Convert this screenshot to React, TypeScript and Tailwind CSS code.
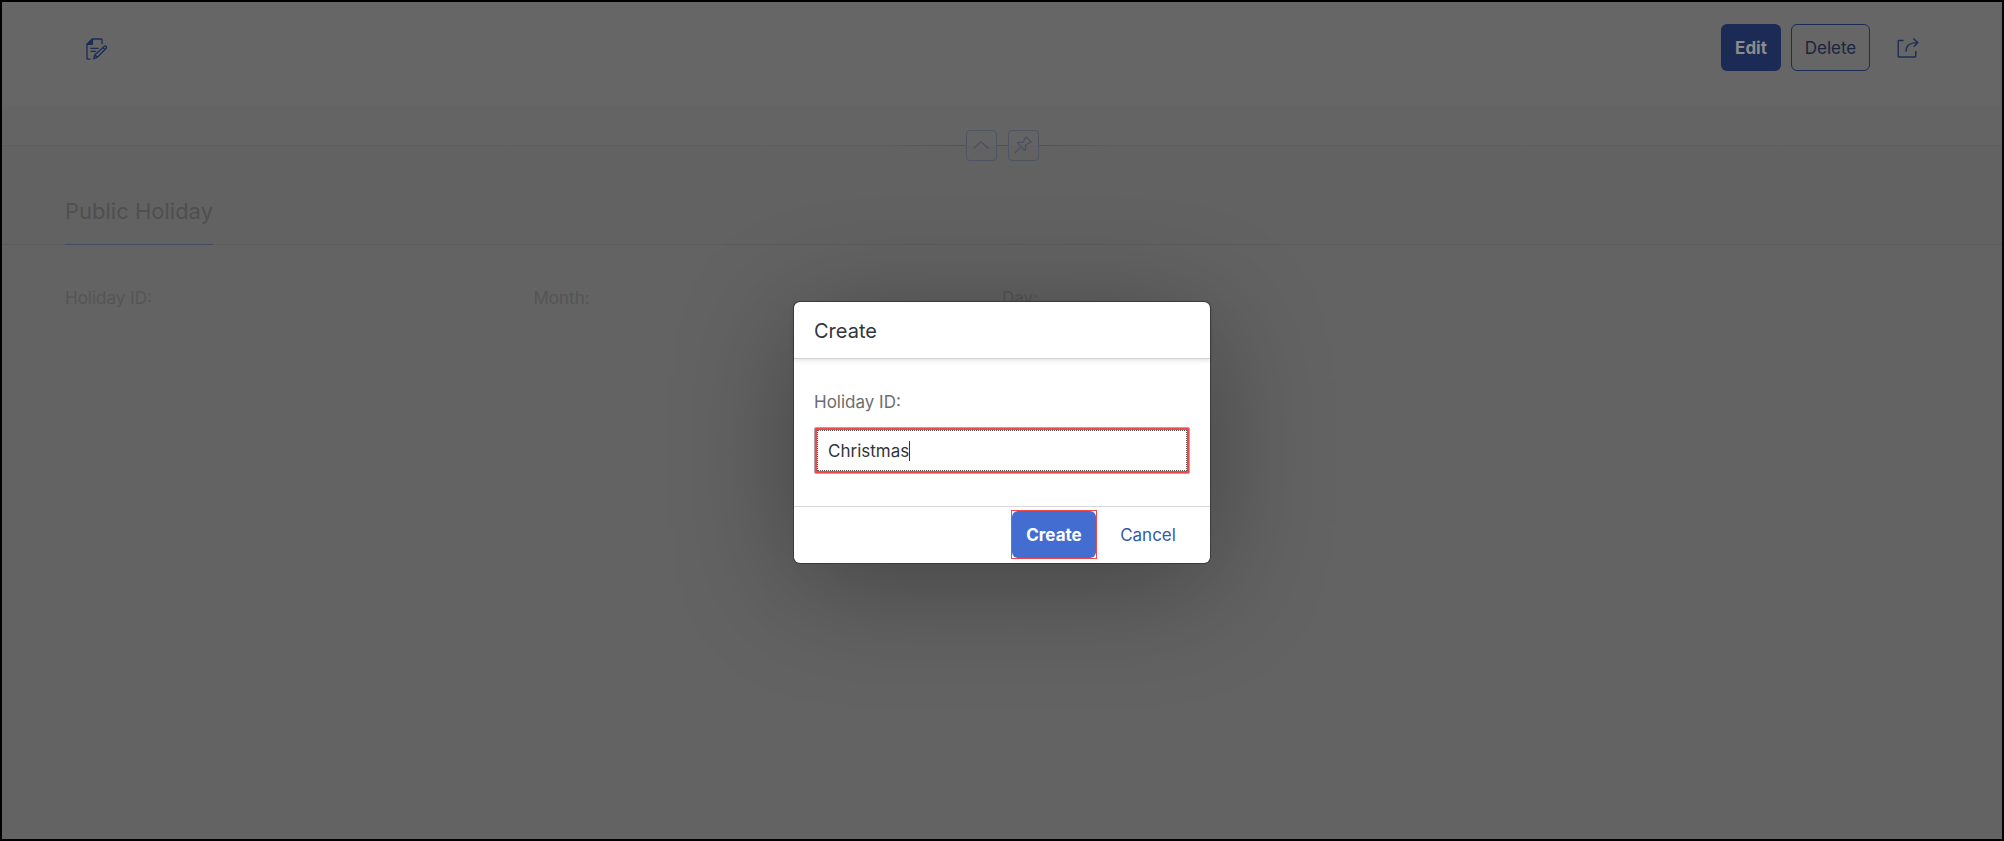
import { useState } from "react";

function DraftIcon() {
  return (
    <svg viewBox="0 0 22 22" className="size-[22px]" fill="none" stroke="#1c2c56" strokeWidth="1.3" strokeLinejoin="round" strokeLinecap="round">
      <path d="M16 5.5V1.6Q16 1 15.4 1H6.5L1 6.5V20.5Q1 21.2 1.7 21.2H4" />
      <path d="M6.3 1V6.3H1Z" fill="#1c2c56" />
      <path d="M5 10.4H12M5 13.4H9.5" />
      <path d="M7.6 20.6L8.9 16.8L18.4 8.2Q19.3 7.6 20.2 8.5Q21 9.5 20.2 10.3L11.2 19.3ZM9 17L11 19.2M17 9.6L19 11.6" />
    </svg>
  );
}

function ShareIcon() {
  return (
    <svg viewBox="0 0 22 20" className="h-5 w-[22px]" fill="none" stroke="#1c2c56" strokeWidth="1.4" strokeLinejoin="round" strokeLinecap="round">
      <path d="M6 2.5H1.9Q1.2 2.5 1.2 3.2V18.3Q1.2 19 1.9 19H18Q18.8 19 18.8 18.3V13.5" />
      <path d="M9 13.2C9 8 12 4.6 20.5 4.6M16.8 1L20.8 4.6L17.2 8.2" />
    </svg>
  );
}

const fields = ["Holiday ID:", "Month:", "Day:"];

export default function App() {
  const [holidayId, setHolidayId] = useState("Christmas");

  return (
    <div className="relative flex min-h-screen flex-col overflow-hidden border-2 border-black bg-[#636363] font-['Inter','Liberation_Sans',sans-serif] text-[17px] leading-6">
      <header className="flex h-[103px] items-start justify-between bg-[#666666] pt-[22px] pr-[66px] pl-[84px]">
        <button type="button" aria-label="Draft" className="mt-3.5">
          <DraftIcon />
        </button>
        <div className="flex items-center gap-2.5">
          <button type="button" className="h-[47px] w-[60px] rounded-md bg-[#1b2b55] text-center font-bold text-[#8c8c8c]">
            Edit
          </button>
          <button type="button" className="h-[47px] w-[79px] rounded-md border border-[#1c2c56] text-center text-[#192440]">
            Delete
          </button>
          <button type="button" aria-label="Share" className="flex h-[47px] w-14 items-center justify-center">
            <ShareIcon />
          </button>
        </div>
      </header>

      <div className="flex h-20 items-center bg-linear-to-b from-[#646464] from-50% to-[#626262] to-50%">
        <div className="h-px flex-1 bg-[#5e5e5e]" />
        <div className="h-px w-20 bg-linear-to-r from-[#5e5e5e] to-[#4c5160]" />
        <button type="button" aria-label="Collapse header" className="flex size-[31px] items-center justify-center rounded-sm border border-[#4f5463]">
          <svg viewBox="0 0 16 8" className="h-2 w-4" fill="none" stroke="#4a5060" strokeWidth="1.2">
            <path d="M0.5 7.5L8 0.8L15.5 7.5" />
          </svg>
        </button>
        <div className="h-px w-[11px] bg-[#4c5160]" />
        <button type="button" aria-label="Pin header" className="flex size-[31px] items-center justify-center rounded-sm border border-[#4f5463]">
          <svg viewBox="0 0 18 18" className="size-[18px]" fill="none" stroke="#4a5060" strokeWidth="1.2" strokeLinejoin="round">
            <path d="M0.8 17L6.5 11.3M3.5 7Q6 5.5 9 6.5L12 0.8L17.2 6L11.3 9Q12.4 12 10.8 14.3Z" />
          </svg>
        </button>
        <div className="h-px w-20 bg-linear-to-l from-[#5e5e5e] to-[#4c5160]" />
        <div className="h-px flex-1 bg-[#5e5e5e]" />
      </div>

      <nav className="flex h-[60px] border-b border-[#5b5b5d] bg-[#626262] px-[63px]">
        <a href="#public-holiday" className="-mb-px border-b border-[#444b62] pt-3 text-[22px] leading-7 text-[#4f4f4f]">
          Public Holiday
        </a>
      </nav>

      <main className="grid grid-cols-4 px-[63px] pt-[41px] text-[#555555]">
        {fields.map((f) => (
          <span key={f}>{f}</span>
        ))}
      </main>

      <div className="absolute inset-0 flex items-center justify-center pt-6">
        <form
          role="dialog"
          aria-label="Create"
          onSubmit={(e) => e.preventDefault()}
          className="flex w-[416px] flex-col rounded-md bg-white shadow-[0_0_0_1px_#3c3c3c,0_20px_120px_0_rgba(0,0,0,0.32)]"
        >
          <h1 className="flex h-[57px] items-center border-b border-[#d2d2d2] px-5 pt-0.5 text-xl text-[#32363a] shadow-[0_2px_4px_rgba(0,0,0,0.1)]">
            Create
          </h1>
          <div className="flex h-[147px] flex-col px-5 pt-[31px]">
            <label htmlFor="holiday-id" className="text-[#6a6d70]">
              Holiday ID:
            </label>
            <div className="relative mt-[13px] h-[47px] rounded-xs border border-[#b9a3aa] bg-[#f04848] p-0.5">
              <input
                id="holiday-id"
                value={holidayId}
                onChange={(e) => setHolidayId(e.target.value)}
                className="block h-full w-full border border-dotted border-[#555555] bg-white px-2.5 text-[#32363a] outline-none"
              />
              <span aria-hidden="true" className="absolute top-[13px] left-[94px] h-5 w-px bg-[#32363a]" />
            </div>
          </div>
          <footer className="flex h-[57px] items-center justify-end gap-2 border-t border-[#d9d9d9] pr-[19px] pb-px">
            <div className="border border-[#f04848]">
              <button type="submit" className="block h-[47px] w-[84px] rounded-md bg-[#446dd1] text-center font-bold text-white">
                Create
              </button>
            </div>
            <button type="button" className="h-[47px] w-[86px] text-center text-[#345aa8]">
              Cancel
            </button>
          </footer>
        </form>
      </div>
    </div>
  );
}
